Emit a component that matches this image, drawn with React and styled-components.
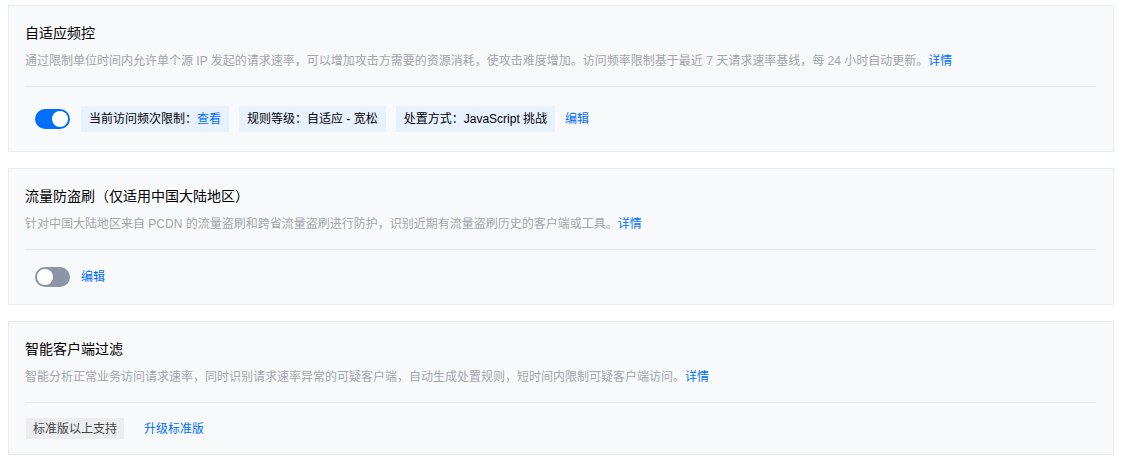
import React from "react";
import styled, { createGlobalStyle } from "styled-components";

const Global = createGlobalStyle`
  html, body { margin: 0; padding: 0; background: #fff; }
  body {
    font-family: "Liberation Sans", "Noto Sans CJK SC", sans-serif;
    -webkit-font-smoothing: antialiased;
  }
`;

const Page = styled.div`
  display: flex;
  flex-direction: column;
  gap: 16px;
  padding: 5px 7px 0 8px;
`;

const Card = styled.section`
  background: #f8f9fb;
  border: 1px solid #e9ebef;
  padding: 16px 16px 0 16px;
`;

const Title = styled.h3`
  margin: 0;
  font-size: 14px;
  line-height: 22px;
  font-weight: 400;
  color: #000;
`;

const Desc = styled.p`
  margin: 7px 0 0;
  font-size: 12px;
  line-height: 20px;
  color: #a2a6ad;
`;

const Link = styled.a`
  color: #006eff;
  text-decoration: none;
  cursor: pointer;
`;

const Divider = styled.div`
  height: 1px;
  background: #e9ebef;
  margin: 15px 1px 0 0;
`;

const Row = styled.div`
  display: flex;
  align-items: center;
  gap: ${(p) => p.$gap || 10}px;
  padding: ${(p) => p.$pt ?? 17}px 0 ${(p) => p.$pb ?? 17}px ${(p) => p.$indent || 0}px;
  font-size: 12px;
  line-height: 20px;
`;

const Toggle = styled.span`
  position: relative;
  width: 35px;
  height: 20px;
  border-radius: 10px;
  background: ${(p) => (p.$on ? "#006eff" : "#8a95a8")};
  flex: none;
  margin-right: 1px;
  &::after {
    content: "";
    position: absolute;
    top: 2px;
    left: ${(p) => (p.$on ? "17px" : "2px")};
    width: 16px;
    height: 16px;
    border-radius: 50%;
    background: #fff;
  }
`;

const InfoTag = styled.span`
  display: inline-flex;
  align-items: center;
  height: 26px;
  padding: 0 8px;
  margin: 2px 0;
  background: #e8f2ff;
  color: #000;
  font-size: 12px;
  white-space: nowrap;
`;

const GrayTag = styled.span`
  display: inline-flex;
  align-items: center;
  height: 21px;
  padding: 0 7px;
  background: #ebedf0;
  color: #444;
  font-size: 12px;
  white-space: nowrap;
`;

export default function App() {
  return (
    <>
      <Global />
      <Page>
        <Card>
          <Title>自适应频控</Title>
          <Desc>
            通过限制单位时间内允许单个源 IP 发起的请求速率，可以增加攻击方需要的资源消耗，使攻击难度增加。访问频率限制基于最近 7 天请求速率基线，每 24 小时自动更新。<Link>详情</Link>
          </Desc>
          <Divider />
          <Row $indent={10} $gap={10}>
            <Toggle $on />
            <InfoTag>
              当前访问频次限制：<Link>查看</Link>
            </InfoTag>
            <InfoTag>规则等级：自适应 - 宽松</InfoTag>
            <InfoTag>处置方式：JavaScript 挑战</InfoTag>
            <Link>编辑</Link>
          </Row>
        </Card>

        <Card>
          <Title>流量防盗刷（仅适用中国大陆地区）</Title>
          <Desc>
            针对中国大陆地区来自 PCDN 的流量盗刷和跨省流量盗刷进行防护，识别近期有流量盗刷历史的客户端或工具。<Link>详情</Link>
          </Desc>
          <Divider />
          <Row $indent={10} $gap={10}>
            <Toggle />
            <Link>编辑</Link>
          </Row>
        </Card>

        <Card>
          <Title>智能客户端过滤</Title>
          <Desc>
            智能分析正常业务访问请求速率，同时识别请求速率异常的可疑客户端，自动生成处置规则，短时间内限制可疑客户端访问。<Link>详情</Link>
          </Desc>
          <Divider />
          <Row $indent={1} $gap={20} $pt={15} $pb={15}>
            <GrayTag>标准版以上支持</GrayTag>
            <Link>升级标准版</Link>
          </Row>
        </Card>
      </Page>
    </>
  );
}
